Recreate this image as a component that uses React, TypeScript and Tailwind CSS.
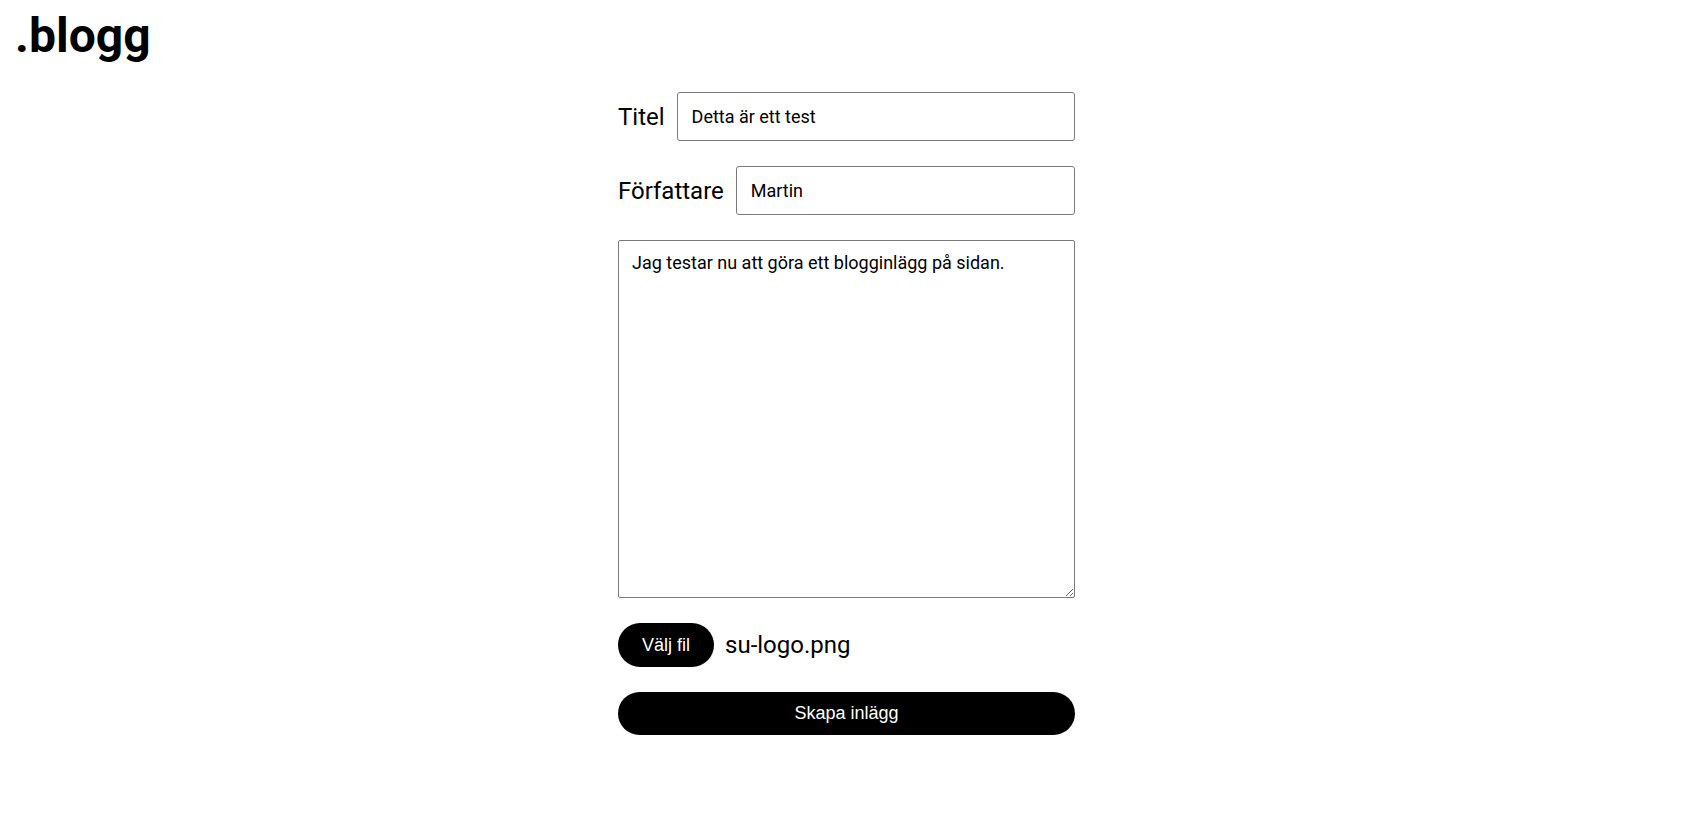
import { useState } from "react"

export default function App() {
  const [title, setTitle] = useState("Detta är ett test")
  const [author, setAuthor] = useState("Martin")
  const [body, setBody] = useState("Jag testar nu att göra ett blogginlägg på sidan.")

  return (
    <div className="min-h-screen bg-white text-black font-['Roboto',sans-serif]">
      <header className="px-[15px] pt-[12px]">
        <h1 className="text-[48px] font-bold leading-none">.blogg</h1>
      </header>

      <form className="mx-auto mt-[32px] flex w-[462px] flex-col gap-[25px] pl-[5px]">
        <label className="flex items-center gap-[12px]">
          <span className="text-[24px]">Titel</span>
          <input
            value={title}
            onChange={(e) => setTitle(e.target.value)}
            className="h-[49px] flex-1 rounded-[3px] border border-[#7a7a7a] px-[14px] text-[18px] outline-none"
          />
        </label>

        <label className="flex items-center gap-[12px]">
          <span className="text-[24px]">Författare</span>
          <input
            value={author}
            onChange={(e) => setAuthor(e.target.value)}
            className="h-[49px] flex-1 rounded-[3px] border border-[#7a7a7a] px-[14px] text-[18px] outline-none"
          />
        </label>

        <textarea
          value={body}
          onChange={(e) => setBody(e.target.value)}
          className="h-[358px] rounded-[2px] border border-[#7a7a7a] px-[13px] pt-[8px] pb-[12px] text-[18px] leading-normal outline-none"
        />

        <div className="flex items-center gap-[11px]">
          <button
            type="button"
            className="h-[44px] rounded-full bg-black px-[24px] font-['Liberation_Sans',sans-serif] text-[18px] text-white"
          >
            Välj fil
          </button>
          <span className="text-[24px]">su-logo.png</span>
        </div>

        <button
          type="submit"
          className="h-[43px] rounded-full bg-black font-['Liberation_Sans',sans-serif] text-[18px] text-white"
        >
          Skapa inlägg
        </button>
      </form>
    </div>
  )
}
